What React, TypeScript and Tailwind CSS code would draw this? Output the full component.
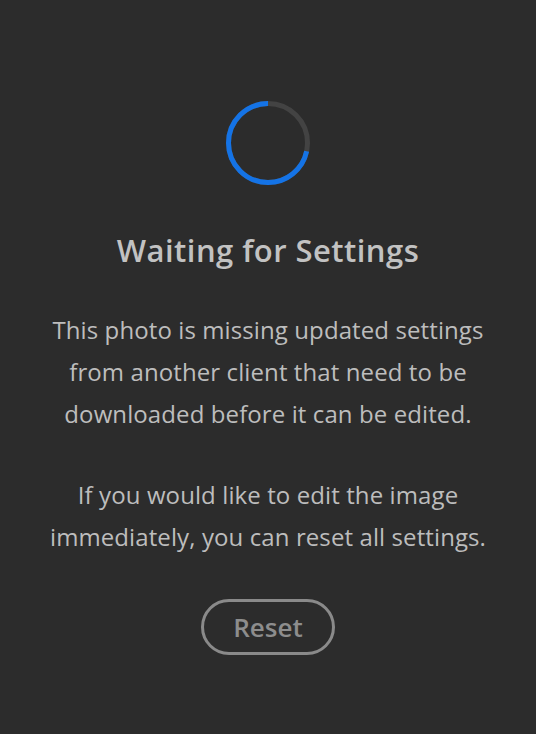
export default function App() {
  return (
    <div
      className="w-[536px] h-[734px] bg-[#2c2c2c] flex flex-col items-center text-center"
      style={{ fontFamily: '"Open Sans", "Noto Sans", sans-serif' }}
    >
      <svg width="88" height="88" viewBox="0 0 88 88" className="mt-[99px] shrink-0">
        <circle cx="44" cy="44" r="39.5" fill="none" stroke="#434343" strokeWidth="5" />
        <circle
          cx="44"
          cy="44"
          r="39.5"
          fill="none"
          stroke="#1473e6"
          strokeWidth="5"
          strokeDasharray="178 70.2"
          strokeDashoffset="-70.2"
          transform="rotate(-90 44 44)"
        />
      </svg>
      <h1 className="mt-[44px] text-[31px] leading-[38px] font-semibold text-[#c2c2c2] whitespace-nowrap tracking-[0.45px]">
        Waiting for Settings
      </h1>
      <p className="mt-[40px] text-[24px] leading-[42px] text-[#bdbdbd] whitespace-nowrap tracking-[0.1px]">
        This photo is missing updated settings
        <br />
        from another client that need to be
        <br />
        downloaded before it can be edited.
      </p>
      <p className="mt-[39px] text-[24px] leading-[42px] text-[#bdbdbd] whitespace-nowrap tracking-[0.1px]">
        If you would like to edit the image
        <br />
        immediately, you can reset all settings.
      </p>
      <button className="mt-[41px] w-[134px] h-[56px] shrink-0 rounded-full border-[3px] border-[#8a8a8a] text-[26px] leading-none font-semibold text-[#8d8d8d]">
        Reset
      </button>
    </div>
  );
}
